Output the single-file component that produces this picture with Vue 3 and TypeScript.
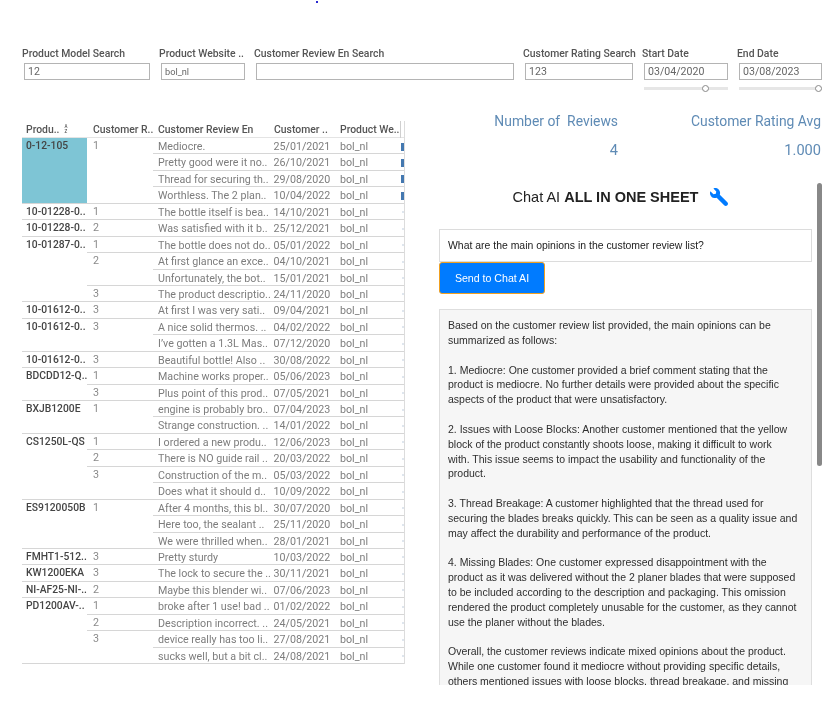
<script setup lang="ts">
interface Review { text: string; date: string }
interface RatingGroup { rating: number; reviews: Review[] }
interface ProductGroup { name: string; ratings: RatingGroup[] }

const r = (text: string, date: string): Review => ({ text, date });

const filters = [
  { label: 'Product Model Search', value: '12' },
  { label: 'Product Website ..', value: 'bol_nl', small: true },
  { label: 'Customer Review En Search', value: '' },
  { label: 'Customer Rating Search', value: '123' },
  { label: 'Start Date', value: '03/04/2020', knob: 74 },
  { label: 'End Date', value: '03/08/2023', knob: 96 },
];

const products: ProductGroup[] = [
  { name: '0-12-105', ratings: [{ rating: 1, reviews: [
    r('Mediocre.', '25/01/2021'),
    r('Pretty good were it no..', '26/10/2021'),
    r('Thread for securing th..', '29/08/2020'),
    r('Worthless. The 2 plan..', '10/04/2022'),
  ] }] },
  { name: '10-01228-0..', ratings: [{ rating: 1, reviews: [r('The bottle itself is bea..', '14/10/2021')] }] },
  { name: '10-01228-0..', ratings: [{ rating: 2, reviews: [r('Was satisfied with it b..', '25/12/2021')] }] },
  { name: '10-01287-0..', ratings: [
    { rating: 1, reviews: [r('The bottle does not do..', '05/01/2022')] },
    { rating: 2, reviews: [r('At first glance an exce..', '04/10/2021'), r('Unfortunately, the bot..', '15/01/2021')] },
    { rating: 3, reviews: [r('The product descriptio..', '24/11/2020')] },
  ] },
  { name: '10-01612-0..', ratings: [{ rating: 3, reviews: [r('At first I was very sati..', '09/04/2021')] }] },
  { name: '10-01612-0..', ratings: [{ rating: 3, reviews: [r('A nice solid thermos. ..', '04/02/2022'), r('I’ve gotten a 1.3L Mas..', '07/12/2020')] }] },
  { name: '10-01612-0..', ratings: [{ rating: 3, reviews: [r('Beautiful bottle! Also ..', '30/08/2022')] }] },
  { name: 'BDCDD12-Q..', ratings: [
    { rating: 1, reviews: [r('Machine works proper..', '05/06/2023')] },
    { rating: 3, reviews: [r('Plus point of this prod..', '07/05/2021')] },
  ] },
  { name: 'BXJB1200E', ratings: [{ rating: 1, reviews: [r('engine is probably bro..', '07/04/2023'), r('Strange construction. ..', '14/01/2022')] }] },
  { name: 'CS1250L-QS', ratings: [
    { rating: 1, reviews: [r('I ordered a new produ..', '12/06/2023')] },
    { rating: 2, reviews: [r('There is NO guide rail ..', '20/03/2022')] },
    { rating: 3, reviews: [r('Construction of the m..', '05/03/2022'), r('Does what it should d..', '10/09/2022')] },
  ] },
  { name: 'ES9120050B', ratings: [{ rating: 1, reviews: [
    r('After 4 months, this bl..', '30/07/2020'),
    r('Here too, the sealant ..', '25/11/2020'),
    r('We were thrilled when..', '28/01/2021'),
  ] }] },
  { name: 'FMHT1-512..', ratings: [{ rating: 3, reviews: [r('Pretty sturdy', '10/03/2022')] }] },
  { name: 'KW1200EKA', ratings: [{ rating: 3, reviews: [r('The lock to secure the ..', '30/11/2021')] }] },
  { name: 'NI-AF25-NI-..', ratings: [{ rating: 2, reviews: [r('Maybe this blender wi..', '07/06/2023')] }] },
  { name: 'PD1200AV-..', ratings: [
    { rating: 1, reviews: [r('broke after 1 use! bad ..', '01/02/2022')] },
    { rating: 2, reviews: [r('Description incorrect. ..', '24/05/2021')] },
    { rating: 3, reviews: [r('device really has too li..', '27/08/2021'), r('sucks well, but a bit cl..', '24/08/2021')] },
  ] },
];

// line breaks follow the reply as it was shown, pre-line keeps them
const paragraphs = [
  'Based on the customer review list provided, the main opinions can be\nsummarized as follows:',
  '1. Mediocre: One customer provided a brief comment stating that the\nproduct is mediocre. No further details were provided about the specific\naspects of the product that were unsatisfactory.',
  '2. Issues with Loose Blocks: Another customer mentioned that the yellow\nblock of the product constantly shoots loose, making it difficult to work\nwith. This issue seems to impact the usability and functionality of the\nproduct.',
  '3. Thread Breakage: A customer highlighted that the thread used for\nsecuring the blades breaks quickly. This can be seen as a quality issue and\nmay affect the durability and performance of the product.',
  '4. Missing Blades: One customer expressed disappointment with the\nproduct as it was delivered without the 2 planer blades that were supposed\nto be included according to the description and packaging. This omission\nrendered the product completely unusable for the customer, as they cannot\nuse the planer without the blades.',
  'Overall, the customer reviews indicate mixed opinions about the product.\nWhile one customer found it mediocre without providing specific details,\nothers mentioned issues with loose blocks, thread breakage, and missing',
];
</script>

<template>
  <div class="page">
    <span class="dot"></span>

    <div class="filters">
      <div v-for="f in filters" :key="f.label" class="filter">
        <div class="filter-label">{{ f.label }}</div>
        <div class="filter-input" :class="{ small: f.small }">{{ f.value }}</div>
        <div v-if="f.knob" class="slider">
          <span class="knob" :style="{ left: f.knob + '%' }"></span>
        </div>
      </div>
    </div>

    <div class="main">
      <div class="sheet">
        <div class="sheet-head">
          <span class="h-product">Produ..<span class="sort">A<br />Z</span></span>
          <span class="h-rating">Customer R..</span>
          <span class="h-review">Customer Review En</span>
          <span class="h-date">Customer ..</span>
          <span class="h-site">Product We..</span>
        </div>
        <div
          v-for="(p, pi) in products"
          :key="pi"
          class="product"
          :class="{ first: pi === 0 }"
        >
          <div class="product-name">{{ p.name }}</div>
          <div class="ratings">
            <div v-for="g in p.ratings" :key="g.rating" class="rating-group">
              <div class="rating">{{ g.rating }}</div>
              <div class="reviews">
                <div v-for="(rv, i) in g.reviews" :key="i" class="review">
                  <span class="review-text">{{ rv.text }}</span>
                  <span class="review-date">{{ rv.date }}</span>
                  <span class="review-site">bol_nl</span>
                  <span class="bar"><i></i></span>
                </div>
              </div>
            </div>
          </div>
        </div>
      </div>

      <div class="side">
        <div class="kpis">
          <div class="kpi kpi-count">
            <div class="kpi-title">Number of &nbsp;Reviews</div>
            <div class="kpi-value">4</div>
          </div>
          <div class="kpi kpi-avg">
            <div class="kpi-title">Customer Rating Avg</div>
            <div class="kpi-value">1.000</div>
          </div>
        </div>

        <div class="chat">
          <h2 class="chat-title">
            Chat AI <b>ALL IN ONE SHEET</b>
            <svg class="wrench" viewBox="0 0 512 512" width="18" height="18">
              <path
                transform="translate(512 0) scale(-1 1)"
                fill="#007bff"
                d="M507.73 109.1c-2.24-9.03-13.54-12.09-20.12-5.51l-74.36 74.36-67.88-11.31-11.31-67.88 74.36-74.36c6.62-6.62 3.43-17.9-5.66-20.16-47.38-11.74-99.55.91-136.58 37.93-39.64 39.64-50.55 97.1-34.05 147.2L18.74 402.76c-24.99 24.99-24.99 65.51 0 90.5 24.99 24.99 65.51 24.99 90.5 0l213.21-213.21c50.12 16.71 107.47 5.68 147.37-34.22 37.07-37.07 49.7-89.32 37.91-136.73z"
              />
            </svg>
          </h2>
          <div class="question">What are the main opinions in the customer review list?</div>
          <button class="send" type="button">Send to Chat AI</button>
          <div class="answer">
            <p v-for="(t, i) in paragraphs" :key="i">{{ t }}</p>
          </div>
          <span class="scrollbar"></span>
        </div>
      </div>
    </div>
  </div>
</template>

<style>
html, body {
  margin: 0;
  background: #fff;
  overflow: hidden;
}
</style>

<style scoped>
.page {
  position: relative;
  box-sizing: border-box;
  width: 838px;
  height: 705px;
  padding: 47px 0 0 22px;
  overflow: hidden;
  font-family: Roboto, "Open Sans", sans-serif;
  filter: blur(0.3px);
}

.dot {
  position: absolute;
  left: 316px;
  top: 1px;
  width: 2px;
  height: 2px;
  background: #2a2ad0;
}

.filters {
  display: grid;
  grid-template-columns: 137px 95px 269px 119px 95px 85px;
  height: 74px;
}
.filter {
  padding-right: 9px;
}
.filter:last-child {
  padding-right: 0;
}
.filter-label {
  height: 16px;
  line-height: 13px;
  font-size: 10.4px;
  font-weight: 500;
  color: #555;
  white-space: nowrap;
}
.filter-input {
  box-sizing: border-box;
  height: 17px;
  margin-left: 2px;
  padding-left: 3px;
  border: 1px solid #b4b4b4;
  line-height: 15px;
  font-size: 10.6px;
  color: #666;
}
.filter-input.small {
  font-size: 9.2px;
}
.slider {
  position: relative;
  height: 3px;
  margin: 7px 0 0 2px;
  background: #e6e6e6;
}
.knob {
  position: absolute;
  top: -2px;
  width: 7px;
  height: 7px;
  margin-left: -4px;
  box-sizing: border-box;
  border: 1px solid #888;
  border-radius: 50%;
  background: #fff;
}

.main {
  display: flex;
  align-items: flex-start;
}

.sheet {
  flex: none;
  box-sizing: border-box;
  width: 383px;
  font-size: 10.7px;
  color: #7d7d7d;
  border-right: 1px solid #dcdcdc;
}
.sheet-head {
  display: grid;
  grid-template-columns: 65px 66px 120px 65px 63px;
  height: 16px;
  border-bottom: 1px solid #e4e4e4;
  line-height: 17px;
  font-size: 10.4px;
  font-weight: 500;
  color: #555;
  white-space: nowrap;
}
.h-product { padding-left: 4px; }
.h-rating { padding-left: 6px; }
.h-review { padding-left: 5px; }
.h-date { padding-left: 1px; }
.h-site { padding-left: 2px; border-right: 1px solid #cfcfcf; }
.sort {
  display: inline-block;
  margin-left: 5px;
  vertical-align: top;
  padding-top: 3px;
  font-size: 4.5px;
  line-height: 5px;
  text-align: center;
}

.product {
  display: flex;
}
.product-name {
  flex: none;
  box-sizing: border-box;
  width: 65px;
  padding: 1px 0 0 4px;
  line-height: 13px;
  font-size: 10.3px;
  font-weight: 500;
  color: #444;
  white-space: nowrap;
  border-bottom: 1px solid #d6d6d6;
}
.first .product-name {
  background: #7ec5d5;
}
.ratings {
  flex: 1;
  min-width: 0;
}
.rating-group {
  display: flex;
}
.rating {
  flex: none;
  box-sizing: border-box;
  width: 66px;
  padding: 1px 0 0 6px;
  line-height: 13px;
  color: #8a8a8a;
  border-bottom: 1px solid #d6d6d6;
}
.reviews {
  flex: 1;
  min-width: 0;
}
.review {
  display: grid;
  grid-template-columns: 120px 65px 63px 3px;
  box-sizing: border-box;
  height: 16.45px;
  line-height: 17px;
  border-bottom: 1px solid #d6d6d6;
  white-space: nowrap;
}
.review-text { padding-left: 5px; }
.review-date { padding-left: 0.5px; }
.review-site { padding-left: 2px; }
.bar {
  display: flex;
  align-items: center;
  padding-left: 1px;
}
.bar i {
  width: 2px;
  height: 2px;
  background: #dfe6ee;
}
.first .bar {
  padding-left: 0;
}
.first .bar i {
  width: 4px;
  height: 8px;
  background: #4478b0;
}

.side {
  flex: none;
  position: relative;
  width: 382px;
  margin: -8px 0 0 34px;
}
.kpis {
  display: grid;
  grid-template-columns: 179px 203px;
  height: 75px;
}
.kpi {
  text-align: right;
  color: #5f8bb5;
}
.kpi-title {
  margin-top: -1px;
  font-size: 13.9px;
  line-height: 18px;
}
.kpi-value {
  margin-top: 11px;
  font-size: 14.6px;
  line-height: 18px;
}

.chat {
  width: 373px;
  font-family: "Liberation Sans", Arial, sans-serif;
}
.chat-title {
  margin: 0 0 23px;
  padding-right: 10px;
  height: 18px;
  line-height: 18px;
  text-align: center;
  font-size: 14.5px;
  font-weight: 400;
  color: #222;
}
.chat-title b {
  font-weight: 700;
}
.wrench {
  margin-left: 12px;
  vertical-align: -4px;
}
.question {
  box-sizing: border-box;
  height: 33px;
  padding-left: 8px;
  border: 1px solid #dcdcdc;
  line-height: 31px;
  font-size: 10.45px;
  color: #222;
}
.send {
  display: block;
  box-sizing: border-box;
  width: 106px;
  height: 32px;
  margin: 0;
  border: 1.5px solid #f0a020;
  border-radius: 3px;
  background: #007bff;
  color: #fff;
  font: 10.6px "Liberation Sans", Arial, sans-serif;
}
.answer {
  box-sizing: border-box;
  height: 376px;
  margin-top: 15px;
  padding: 8px 8px 0;
  overflow: hidden;
  background: #f6f6f6;
  border: 1px solid #dedede;
  border-bottom: 0;
  font-size: 10.5px;
  line-height: 14.84px;
  color: #2e2e2e;
  white-space: pre-line;
}
.answer p {
  margin: 0 0 14.84px;
}

.scrollbar {
  position: absolute;
  left: 378px;
  top: 70px;
  width: 5px;
  height: 283px;
  border-radius: 3px;
  background: #888;
}
</style>
